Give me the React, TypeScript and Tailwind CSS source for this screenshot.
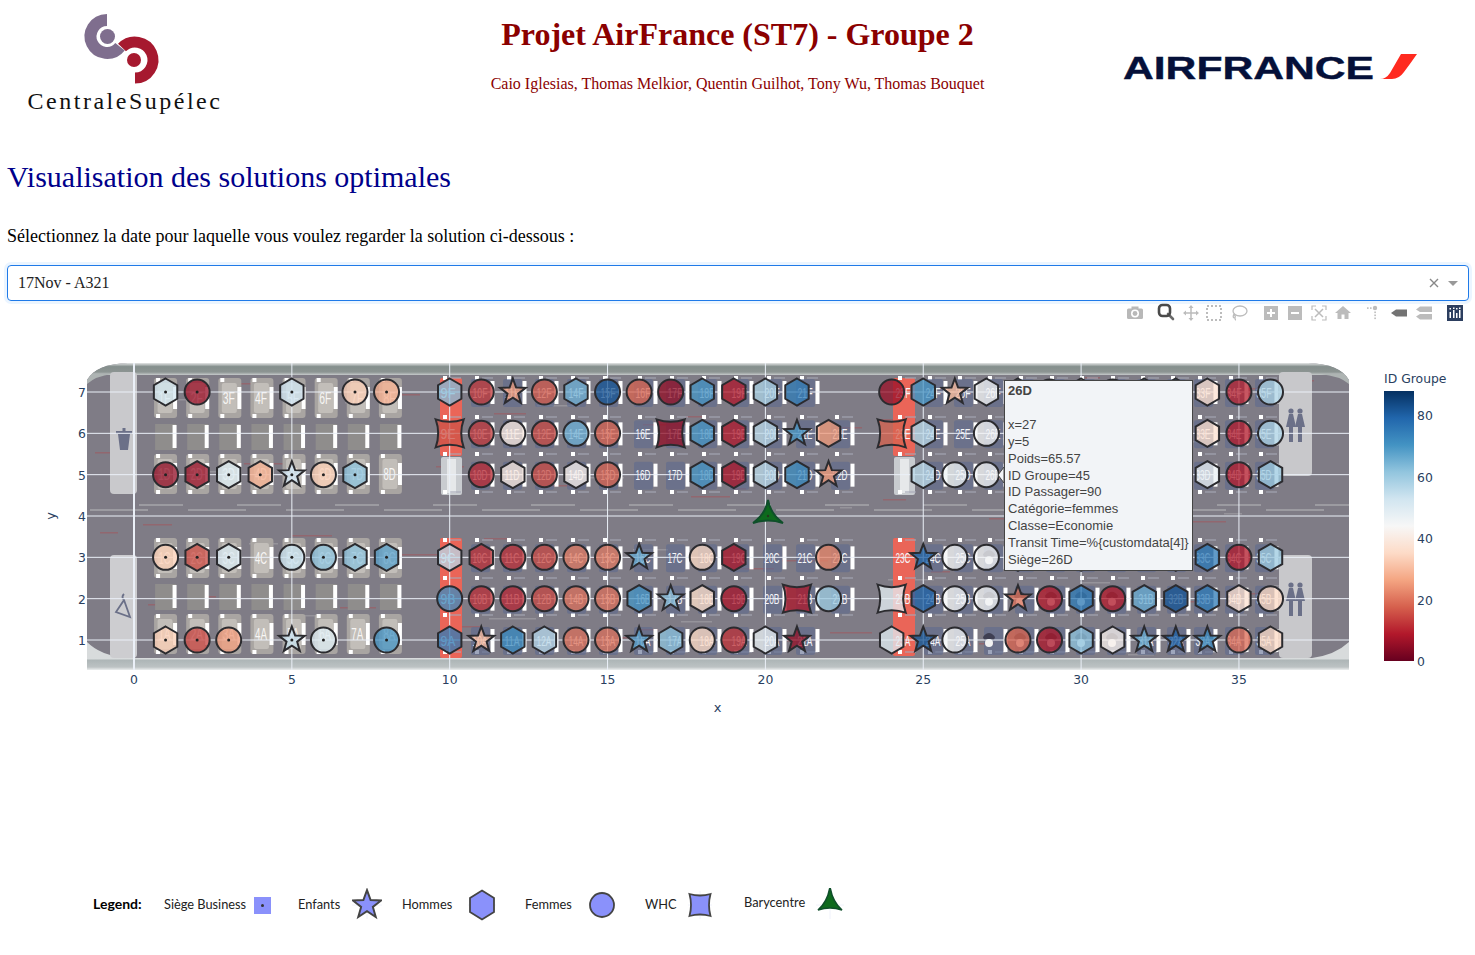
import React from "react";

const X = (x: number) => 134 + x * 31.57;
const Y = (y: number) => 640 - (y - 1) * 41.333;

const STOPS: [number, number, number][] = [
  [103, 0, 31], [178, 24, 43], [214, 96, 77], [244, 165, 130], [253, 219, 199], [247, 247, 247],
  [209, 229, 240], [146, 197, 222], [67, 147, 195], [33, 102, 172], [5, 48, 97],
];
function rdbu(v: number) {
  const t = Math.max(0, Math.min(1, v / 88)) * 10;
  const i = Math.min(9, Math.floor(t));
  const f = t - i;
  const c = STOPS[i].map((a, k) => Math.round(a + (STOPS[i + 1][k] - a) * f));
  return `rgb(${c[0]},${c[1]},${c[2]})`;
}

const ROWS: Record<number, string> = {
  7: "1h52 2c6 5h53 7c33 8c28 10h63 11c13 12s25 13c17 14h65 15c82 16c18 17c5 18h70 19h9 20h58 21h75 24c6 25h70 26s30 27h45 28h66 29c70 30h40 31c8 32h75 33h72 34h37 35c10 36c58",
  6: "10w16 11c13 12c40 13c15 14c65 15c18 17w5 18h70 19h9 20h56 21s70 22h25 24w18 25h56 27c45 34h37 35c9 36c58",
  5: "1c5 2h6 3h50 4h28 5s53 6c33 7h62 11c11 12h40 13c15 14h42 15c18 18h70 19h8 20h56 21h72 22s25 25h56 26c46 27c45 34h47 35c9 36h60",
  3: "1c33 2h15 3h51 5c54 6c62 7h62 8h68 10h56 11h12 12c12 13c15 14c21 15c21 16s66 18c35 19h8 22c22 25s80 26c45 27c45 28h72 29c12 30h70 31c9 32c60 33h70 34h75 35c9 36h60",
  2: "10c72 11c12 12c11 13c15 14c20 15c20 16h70 17s62 18h36 19c8 21w8 22c60 24w48 25h80 26c45 27c45 28s20 29c9 30h75 31c9 32h66 33h82 34h75 35h37 36c35",
  1: "1h33 2c14 3c25 5s54 6c50 8c70 10h75 11s30 12h72 13h56 14c20 15c20 16s68 17h62 18c35 19c12 20h47 21s5 24h49 25s82 26c45 28c18 29c8 30h62 31h42 32s66 33s80 34s72 35c19 36h35",
};

const HEX = "M0,-13.5 L11.7,-6.75 L11.7,6.75 L0,13.5 L-11.7,6.75 L-11.7,-6.75Z";
const STAR = (() => {
  const p: string[] = [];
  for (let i = 0; i < 10; i++) {
    const r = i % 2 ? 5.6 : 13.5;
    const a = (-90 + i * 36) * (Math.PI / 180);
    p.push(`${(r * Math.cos(a)).toFixed(2)},${(r * Math.sin(a)).toFixed(2)}`);
  }
  return "M" + p.join(" L") + "Z";
})();
const SQUARE = "M-14,-14 Q0,-9 14,-14 Q9,0 14,14 Q0,9 -14,14 Q-9,0 -14,-14Z";
const TRI = "M0,-16 Q2.5,-2 15,7 Q0,2 -15,7 Q-2.5,-2 0,-16Z";

function Marker({ sym, fill, stroke = "#2b2b2f", sw = 2, op = 0.76 }: { sym: string; fill: string; stroke?: string; sw?: number; op?: number }) {
  const common = { fill, fillOpacity: op, stroke, strokeWidth: sw };
  if (sym === "c") return <circle r={12.5} {...common} />;
  if (sym === "h") return <path d={HEX} {...common} />;
  if (sym === "s") return <path d={STAR} {...common} />;
  return <path d={SQUARE} {...common} />;
}

const ECO: [string, number][] = [
  ["9", 448], ["10", 480], ["11", 512], ["12", 544], ["14", 576], ["15", 608], ["16", 643], ["17", 675], ["18", 707],
  ["19", 739], ["20", 772], ["21", 805], ["22", 840], ["23", 903], ["24", 933], ["25", 963], ["26", 993], ["27", 1024],
  ["28", 1055], ["29", 1085], ["30", 1116], ["31", 1146], ["32", 1176], ["33", 1203], ["34", 1234], ["35", 1264],
];
const LETTERS: [string, number][] = [["F", 7], ["E", 6], ["D", 5], ["C", 3], ["B", 2], ["A", 1]];
const BIZ: [string, number, number][] = [["F", 7, 398], ["D", 5, 474], ["C", 3, 558], ["A", 1, 634]];
const STUDS = [378, 417, 454, 492, 540, 578, 615, 652];

function Seats() {
  const out: React.ReactNode[] = [];
  for (let c = 1; c <= 8; c++) {
    const cx = X(c) + (c - 1) * 0.55;
    for (const [l, , cy] of BIZ) {
      out.push(
        <g key={`b${c}${l}`} transform={`translate(${cx},${cy})`}>
          <rect x={-11.5} y={-20} width={23} height={40} rx={3} fill="#a9a5a2" />
          <rect x={-8} y={-15} width={15} height={30} rx={2} fill="#c2beb9" />
          <rect x={7.5} y={-11} width={4} height={22} fill="#fff" />
          <rect x={-9.5} y={-20} width={4} height={4} fill="#fff" />
          <rect x={-9.5} y={16} width={4} height={4} fill="#fff" />
          <text x={-1} y={6} fontSize={16} fill="#f8f6f4" textAnchor="middle" fontFamily="Liberation Sans" textLength={12} lengthAdjust="spacingAndGlyphs">{`${c}${l}`}</text>
        </g>
      );
    }
    for (const [r, cy] of [[6, 437], [2, 597]]) {
      out.push(
        <g key={`bp${c}${r}`} transform={`translate(${cx},${cy})`}>
          <rect x={-10.5} y={-13} width={21} height={26} fill="#8f8d8c" />
          <rect x={7} y={-12} width={4} height={23} fill="#fff" />
        </g>
      );
    }
  }
  for (const [n, cx] of ECO) {
    const exit = n === "9" || n === "23";
    const face = ["26", "27", "28", "29", "30"].includes(n);
    const num = Number(n);
    for (const y of STUDS) {
      if (n === "22" && (y === 378 || y === 652)) continue;
      out.push(
        <g key={`st${n}-${y}`}>
          <rect x={cx + 2} y={y - 1} width={11} height={2} fill="#a6a8b6" fillOpacity={0.55} />
          <rect x={cx - 5} y={y - 2} width={4} height={4} fill="#fff" />
        </g>
      );
    }
    for (const [l, r] of LETTERS) {
      if (n === "22" && (l === "F" || l === "A")) continue;
      if (exit && l === "D") continue;
      const cy = Y(r);
      const hasFace = face && r <= 3;
      const hidden = num >= 27 && num <= 32 && r >= 3;
      out.push(
        <g key={`e${n}${l}`} transform={`translate(${cx},${cy})`}>
          {!exit && <rect x={-9} y={-13} width={19} height={28} rx={2} fill="#5e6a8f" fillOpacity={0.6} />}
          {!exit && <rect x={10.5} y={-11} width={4} height={23} fill="#fff" />}
          {hasFace && !hidden && (
            <g>
              <path d="M-10,-3 Q-4,-11 2,-3 L1,0 L-9,0Z" fill="#3f3f52" />
              <circle cx={-4} cy={3} r={4} fill="#f2f2f2" />
            </g>
          )}
          {!hasFace && !hidden && (
            <text x={0} y={5.5} fontSize={15} fill="#f6f7fa" textAnchor="middle" fontFamily="Liberation Sans" textLength={15} lengthAdjust="spacingAndGlyphs">{`${n}${l}`}</text>
          )}
        </g>
      );
    }
  }
  return <g>{out}</g>;
}

function Person({ x, y }: { x: number; y: number }) {
  return (
    <g fill="#6b7088" transform={`translate(${x},${y})`}>
      <circle cx={0} cy={-15} r={2.6} />
      <path d="M-2,-12 L2,-12 L5,1 L2,1 L2,16 L-2,16 L-2,1 L-5,1Z" />
    </g>
  );
}

function Cabin() {
  const marks: React.ReactNode[] = [];
  for (let i = 0; i < 70; i++) {
    const x = 90 + ((i * 197) % 1230);
    const y = 372 + ((i * 83) % 285);
    const w = 10 + ((i * 7) % 38);
    marks.push(<rect key={i} x={x} y={y} width={w} height={1.5} fill={i % 3 === 0 ? "#a8a6ac" : "#a3555d"} fillOpacity={0.55} />);
  }
  const aisle: React.ReactNode[] = [];
  for (let i = 0; i < 26; i++) {
    const x = 90 + i * 49;
    aisle.push(<rect key={`a${i}`} x={x} y={i % 2 ? 504 : 509} width={i % 2 ? 44 : 58} height={2} fill="#a4a2a8" fillOpacity={0.8} />);
  }
  return (
    <g>
      <defs>
        <clipPath id="hull">
          <path d="M87,380 Q96,364 128,363 L1308,363 Q1340,364 1349,380 L1349,670 L87,670Z" />
        </clipPath>
        <linearGradient id="topband" x1="0" y1="0" x2="0" y2="1">
          <stop offset="0" stopColor="#e4e6e6" />
          <stop offset="0.3" stopColor="#858f8d" />
          <stop offset="0.75" stopColor="#8c9492" />
          <stop offset="1" stopColor="#c6cacb" />
        </linearGradient>
        <linearGradient id="botband" x1="0" y1="0" x2="0" y2="1">
          <stop offset="0" stopColor="#e3e5e6" />
          <stop offset="0.2" stopColor="#aeb6b7" />
          <stop offset="0.75" stopColor="#bcc2c3" />
          <stop offset="1" stopColor="#eceeee" />
        </linearGradient>
        <linearGradient id="cbar" x1="0" y1="1" x2="0" y2="0">
          {STOPS.map((s, i) => (
            <stop key={i} offset={i / 10} stopColor={`rgb(${s[0]},${s[1]},${s[2]})`} />
          ))}
        </linearGradient>
      </defs>
      <g clipPath="url(#hull)">
        <rect x={87} y={363} width={1262} height={307} fill="#7f7c86" />
        {marks}
        {aisle}
        <rect x={87} y={363} width={1262} height={12} fill="url(#topband)" />
        <rect x={87} y={658} width={1262} height={12} fill="url(#botband)" />
        <path d="M87,642 Q100,655 125,658 L87,658Z" fill="#d8dbdc" />
        <path d="M1349,642 Q1335,655 1312,658 L1349,658Z" fill="#d8dbdc" />
        <path d="M87,384 Q96,376 112,374 L87,374Z" fill="#aeb4b3" />
        <path d="M1349,384 Q1340,376 1320,374 L1349,374Z" fill="#aeb4b3" />
        <rect x={110} y={372} width={27} height={122} rx={4} fill="#c9c9cc" />
        <rect x={110} y={555} width={27} height={103} rx={4} fill="#cdcdd0" />
        <rect x={1279} y={372} width={33} height={104} rx={4} fill="#c8c8cb" />
        <rect x={1279} y={555} width={33} height={103} rx={4} fill="#c8c8cb" />
        <rect x={440} y={378} width={22} height={78} rx={2} fill="#ea6558" />
        <rect x={440} y={538} width={22} height={120} rx={2} fill="#ea6558" />
        <rect x={893} y={378} width={22} height={78} rx={2} fill="#ea6558" />
        <rect x={893} y={538} width={22} height={118} rx={2} fill="#ea6558" />
        <rect x={441} y={457} width={21} height={38} rx={2} fill="#c9ccd0" />
        <rect x={447} y={459} width={9} height={34} fill="#e6e8ea" />
        <rect x={894} y={457} width={21} height={38} rx={2} fill="#c9ccd0" />
        <rect x={900} y={459} width={9} height={34} fill="#e6e8ea" />
        <Seats />
        <path d="M118,434 L130,434 L128,450 L120,450Z" fill="#6b7088" />
        <rect x={116} y={431} width={16} height={3} fill="#6b7088" />
        <rect x={122.5} y={428} width={3} height={3} fill="#6b7088" />
        <path d="M124,594 Q121,597 124,600 L116,612 L130,617 L124,600" fill="none" stroke="#6b7088" strokeWidth={1.8} />
        <Person x={1291} y={426} />
        <Person x={1300} y={426} />
        <Person x={1291} y={600} />
        <Person x={1300} y={600} />
      </g>
    </g>
  );
}

function Grid() {
  return (
    <g stroke="#ebf0f8">
      {[5, 10, 15, 20, 25, 30, 35].map((v) => (
        <line key={v} x1={X(v)} x2={X(v)} y1={363} y2={670} strokeWidth={1} />
      ))}
      <line x1={X(0)} x2={X(0)} y1={363} y2={670} strokeWidth={2} />
      {[1, 2, 3, 4, 5, 6, 7].map((v) => (
        <line key={v} x1={87} x2={1349} y1={Y(v)} y2={Y(v)} strokeWidth={1} />
      ))}
    </g>
  );
}

function Markers() {
  const out: React.ReactNode[] = [];
  for (const r of Object.keys(ROWS)) {
    const row = Number(r);
    for (const tok of ROWS[row].split(" ")) {
      const m = /^(\d+)([chsw])(\d+)$/.exec(tok);
      if (!m) continue;
      const col = Number(m[1]);
      out.push(
        <g key={`${row}-${col}`} transform={`translate(${X(col)},${Y(row)})`}>
          <Marker sym={m[2]} fill={rdbu(Number(m[3]))} />
          {col <= 8 && <circle r={1.5} fill="#222" />}
        </g>
      );
    }
  }
  out.push(
    <g key="bary" transform="translate(768,516)">
      <path d={TRI} fill="#0e6a1d" stroke="#0f4f2a" strokeWidth={2} />
      <circle r={1.2} fill="#26361e" />
    </g>
  );
  return <g>{out}</g>;
}

function Axes() {
  const t = { fill: "#2a3f5f", fontFamily: "DejaVu Sans", fontSize: 12.4 };
  return (
    <g>
      {[0, 5, 10, 15, 20, 25, 30, 35].map((v) => (
        <text key={v} x={X(v)} y={684} textAnchor="middle" {...t}>{v}</text>
      ))}
      {[1, 2, 3, 4, 5, 6, 7].map((v) => (
        <text key={v} x={86} y={Y(v) + 5} textAnchor="end" {...t}>{v}</text>
      ))}
      <text x={717.5} y={712} textAnchor="middle" {...t} fontSize={13}>x</text>
      <text transform="translate(55,516) rotate(-90)" textAnchor="middle" {...t} fontSize={13}>y</text>
      <text x={1384} y={383} {...t}>ID Groupe</text>
      <rect x={1384} y={391} width={30} height={270} fill="url(#cbar)" />
      {[80, 60, 40, 20, 0].map((v) => (
        <text key={v} x={1417} y={661 - v * 3.075 + 5} {...t}>{v}</text>
      ))}
    </g>
  );
}

function Modebar() {
  const g = "#bcbcbc";
  const d = "#6a6a6a";
  return (
    <g>
      <g transform="translate(1135,313)" fill="#b8b8b8">
        <rect x={-8} y={-4.5} width={16} height={10.5} rx={1.5} />
        <rect x={-3.5} y={-6.5} width={7} height={3} />
        <circle cy={0.5} r={4} fill="#fff" />
        <circle cy={0.5} r={2.4} />
      </g>
      <g transform="translate(1166,312)">
        <path d="M2,2 L7,7" stroke={d} strokeWidth={2.6} strokeLinecap="round" />
        <rect x={-7} y={-7} width={11} height={11} rx={3.5} fill="none" stroke="#4a4a4a" strokeWidth={2.6} />
      </g>
      <g transform="translate(1191,313)" stroke={g} strokeWidth={1.5} fill={g}>
        <path d="M-6,0 L6,0 M0,-6 L0,6" />
        <path d="M-8,0 L-5,-2.5 L-5,2.5Z M8,0 L5,-2.5 L5,2.5Z M0,-8 L-2.5,-5 L2.5,-5Z M0,8 L-2.5,5 L2.5,5Z" stroke="none" />
      </g>
      <rect x={1207} y={306} width={14} height={14} fill="none" stroke={g} strokeWidth={2} strokeDasharray="2 2" />
      <g transform="translate(1239,312)" fill="none" stroke={g} strokeWidth={1.3}>
        <ellipse cx={1} cy={-1} rx={7} ry={5} />
        <path d="M-5,2 Q-7,6 -4,6 Q-3,4 -5,2 M-4,6 Q-4,8 -3,8" />
      </g>
      <g transform="translate(1271,313)">
        <rect x={-7} y={-7} width={14} height={14} fill={g} />
        <path d="M-4,0 L4,0 M0,-4 L0,4" stroke="#fff" strokeWidth={2} />
      </g>
      <g transform="translate(1295,313)">
        <rect x={-7} y={-7} width={14} height={14} fill={g} />
        <path d="M-4,0 L4,0" stroke="#fff" strokeWidth={2} />
      </g>
      <g transform="translate(1319,313)" fill="none" stroke={g} strokeWidth={1.2}>
        <path d="M-7,-3 L-7,-7 L-3,-7 M3,-7 L7,-7 L7,-3 M7,3 L7,7 L3,7 M-3,7 L-7,7 L-7,3" />
        <path d="M-4,-4 L4,4 M4,-4 L-4,4" strokeWidth={1.5} />
      </g>
      <path transform="translate(1343,313)" d="M0,-7 L8,0 L5.5,0 L5.5,6 L1.5,6 L1.5,1.5 L-1.5,1.5 L-1.5,6 L-5.5,6 L-5.5,0 L-8,0Z" fill={g} />
      <g transform="translate(1373,313)" fill={g}>
        <circle cx={2} cy={-5} r={2.2} />
        <rect x={-6} y={-5.7} width={1.6} height={1.6} />
        <rect x={-3} y={-5.7} width={1.6} height={1.6} />
        <rect x={1.3} y={-1.5} width={1.6} height={1.6} />
        <rect x={1.3} y={1.5} width={1.6} height={1.6} />
        <rect x={1.3} y={4.5} width={1.6} height={1.6} />
      </g>
      <path transform="translate(1399,313)" d="M-8,0 L-3,-3.5 L8,-3.5 L8,3.5 L-3,3.5Z" fill="#737373" />
      <path transform="translate(1424,313)" d="M-8,-3.5 L-4,-6.5 L8,-6.5 L8,-1 L-4,-1Z M-8,3.5 L-4,1 L8,1 L8,6.5 L-4,6.5Z" fill={g} />
      <g transform="translate(1455,313)">
        <rect x={-8} y={-8} width={16} height={16} fill="#2c3e5f" />
        <g fill="#fff">
          <rect x={-5.5} y={-1} width={1.5} height={6} />
          <rect x={-2} y={-3} width={1.5} height={8} />
          <rect x={1} y={0} width={1.5} height={5} />
          <rect x={4} y={-3} width={1.5} height={8} />
          <rect x={-5.5} y={-5} width={1.5} height={1.5} />
          <rect x={-2} y={-5.5} width={1.5} height={1.5} />
          <rect x={1} y={-5} width={1.5} height={1.5} />
          <rect x={4} y={-5.5} width={1.5} height={1.5} />
        </g>
      </g>
    </g>
  );
}

function CsLogo() {
  return (
    <svg width={80} height={72} viewBox="85 14 80 72" className="block overflow-visible">
      <path d="M107,20 A16.5,16.5 0 1 0 120,46.7" fill="none" stroke="#7f6e8e" strokeWidth={12} />
      <circle cx={107.5} cy={36.5} r={7.5} fill="#7f6e8e" />
      <path d="M122,47.5 A18,18 0 1 1 135,78" fill="none" stroke="#a6192f" strokeWidth={11} />
      <circle cx={134} cy={60} r={7} fill="#a6192f" />
    </svg>
  );
}

function AfLogo() {
  return (
    <svg width={296} height={34} viewBox="1123 50 296 34" className="block overflow-visible">
      <text x={1123} y={79} fontFamily="Liberation Sans" fontWeight={700} fontSize={32} fill="#051039" textLength={251} lengthAdjust="spacingAndGlyphs" stroke="#051039" strokeWidth={0.4}>AIRFRANCE</text>
      <path d="M1401,54 L1417,54 Q1410,64 1404,72 Q1399,79 1392,79 L1380,79 Q1386,79 1390,73Z" fill="#ff2a1f" />
    </svg>
  );
}

const LEGEND_FILL = "#8a91fb";

function LegendIcon({ w, children }: { w: number; children: React.ReactNode }) {
  return (
    <svg width={w} height={34} viewBox={`${-w / 2} -17 ${w} 34`} className="block shrink-0">
      <path d={`M${-w / 2},0 L${w / 2},0 M0,-14 L0,14`} stroke="#f0f2fb" strokeWidth={1} />
      {children}
    </svg>
  );
}

export default function App() {
  const lines = ["x=27", "y=5", "Poids=65.57", "ID Groupe=45", "ID Passager=90", "Catégorie=femmes", "Classe=Economie", "Transit Time=%{customdata[4]}", "Siège=26D"];
  return (
    <div className="w-[1475px] h-[955px] overflow-hidden bg-white pl-[7px] pr-[6px] [font-family:'Liberation_Serif',serif] text-black">
      <header className="h-[152px] -ml-[7px] -mr-[6px]">
        <div className="flex items-start justify-between">
          <div className="w-[352px] pt-[14px]">
            <div className="w-[250px] flex flex-col items-center">
              <CsLogo />
              <div className="mt-[1px] text-[24px] leading-[28px] tracking-[2.5px] text-[#111]">CentraleSupélec</div>
            </div>
          </div>
          <div className="pt-[16px] text-center text-[#8b0000]">
            <h1 className="text-[32px] leading-[37px] font-bold">Projet AirFrance (ST7) - Groupe 2</h1>
            <p className="mt-[22px] text-[16px] leading-[18px]">Caio Iglesias, Thomas Melkior, Quentin Guilhot, Tony Wu, Thomas Bouquet</p>
          </div>
          <div className="w-[352px] pt-[50px] flex"><AfLogo /></div>
        </div>
      </header>
      <h2 className="mt-[7px] text-[30px] leading-[36px] text-[#00008b]">Visualisation des solutions optimales</h2>
      <p className="mt-[31px] text-[18px] leading-[21px]">Sélectionnez la date pour laquelle vous voulez regarder la solution ci-dessous :</p>
      <div className="mt-[18px] h-9 flex items-center rounded-[4px] border border-[#1f7ae8] shadow-[0_0_0_3px_rgba(0,126,255,0.08)] pl-[10px] pr-[10px] text-[16px] text-[#222]">
        <span className="flex-1">17Nov - A321</span>
        <svg width={10} height={10} viewBox="0 0 10 10" className="mr-[9px]">
          <path d="M1,1 L9,9 M9,1 L1,9" stroke="#888" strokeWidth={1.4} />
        </svg>
        <span className="w-0 h-0 border-x-[5px] border-x-transparent border-t-[5px] border-t-[#999]" />
      </div>
      <div className="relative mt-[2px] h-[450px]">
        <svg width={1462} height={450} viewBox="7 303 1462 450" className="block">
          <Cabin />
          <Grid />
          <Markers />
          <Axes />
          <Modebar />
          <path d="M1004,467 L998,475 L1004,483Z" fill="#f2f4f7" stroke="#444" />
        </svg>
        <div className="absolute left-[997px] top-[77px] w-[189px] h-[191px] bg-[#f2f4f7] border border-[#444] px-[3px] py-[2px] text-[13px] leading-[16.9px] text-[#444] [font-family:'Liberation_Sans',sans-serif] whitespace-nowrap">
          <div className="font-bold">26D</div>
          <div className="h-[16.9px]" />
          {lines.map((l) => (
            <div key={l}>{l}</div>
          ))}
        </div>
      </div>
      <div className="mt-[134px] ml-[86px] flex items-center h-[36px] text-[12.8px] text-[#222] [font-family:Lato,sans-serif]">
        <span className="w-[71px] font-bold text-[14px] text-black -mt-[3px]">Legend:</span>
        <span className="w-[90px]">Siège Business</span>
        <span className="w-[17px] h-[17px] bg-[#8a91fb] flex items-center justify-center">
          <span className="w-[3px] h-[3px] rounded-full bg-[#333]" />
        </span>
        <span className="ml-[27px] w-[54px]">Enfants</span>
        <LegendIcon w={30}>
          <path d={STAR} transform="scale(1.1)" fill={LEGEND_FILL} stroke="#444" strokeWidth={1.8} />
        </LegendIcon>
        <span className="ml-[20px] w-[66px]">Hommes</span>
        <LegendIcon w={28}>
          <path d="M0,-14.5 L12,-7 L12,7 L0,14.5 L-12,7 L-12,-7Z" fill={LEGEND_FILL} stroke="#444" strokeWidth={1.8} />
        </LegendIcon>
        <span className="ml-[29px] w-[64px]">Femmes</span>
        <LegendIcon w={26}>
          <ellipse rx={12} ry={12} fill={LEGEND_FILL} stroke="#444" strokeWidth={1.8} />
        </LegendIcon>
        <span className="ml-[30px] w-[43px]">WHC</span>
        <LegendIcon w={24}>
          <path d="M-10.5,-11 Q0,-8 10.5,-11 Q7.5,0 10.5,11 Q0,8 -10.5,11 Q-7.5,0 -10.5,-11Z" fill={LEGEND_FILL} stroke="#444" strokeWidth={1.8} />
        </LegendIcon>
        <span className="ml-[32px] w-[72px] -mt-[5px]">Barycentre</span>
        <LegendIcon w={28}>
          <path d="M0,-13 Q2.5,2 12,10 Q0,6 -12,10 Q-2.5,2 0,-13Z" transform="translate(0,-5)" fill="#0e6a1d" stroke="#0f4f2a" strokeWidth={1.6} />
        </LegendIcon>
      </div>
    </div>
  );
}
